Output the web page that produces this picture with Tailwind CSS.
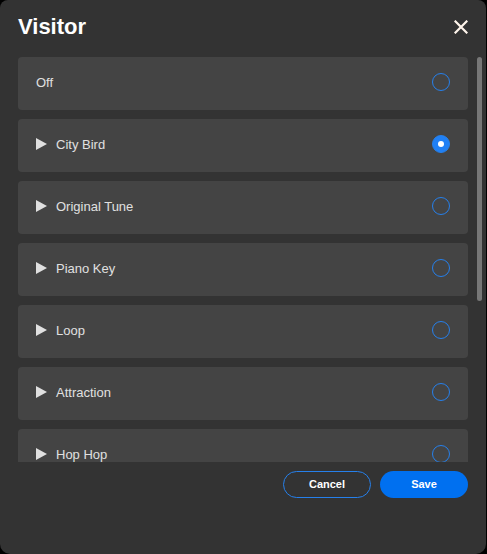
<!DOCTYPE html>
<html lang="en">
<head>
    <meta charset="UTF-8">
    <meta name="viewport" content="width=device-width, initial-scale=1.0">
    <title>Visitor</title>
    <script src="https://cdn.jsdelivr.net/npm/@tailwindcss/browser@4"></script>
</head>
<body class="bg-black font-['Liberation_Sans',Arial,sans-serif]">
    <form class="mr-px h-screen rounded-t-lg rounded-b-[10px] bg-[#333333] pl-[18px] text-[#e0e0e0]">
        <header class="flex h-[57px] items-start justify-between pt-[13px] pr-[18px]">
            <h1 class="text-[22px] leading-7 font-bold text-white">Visitor</h1>
            <button type="button" aria-label="Close" class="mt-[7px]">
                <svg class="block size-3.5" viewBox="0 0 14 14" fill="none" stroke="#fff5ec" stroke-width="2.2">
                    <path d="M.7.7 13.3 13.3M13.3.7.7 13.3" />
                </svg>
            </button>
        </header>

        <div class="flex gap-[9px] pr-1">
            <div id="tones" class="flex h-[405px] flex-1 flex-col gap-[9px] overflow-y-auto [scrollbar-width:none]"></div>
            <div class="h-[244px] w-[5px] rounded-full bg-[#777777]"></div>
        </div>

        <footer class="flex justify-end gap-[9px] pt-[9px] pr-[18px] text-[11px] font-bold text-white">
            <button type="button" class="h-[27px] w-[88px] rounded-full border border-[#2680eb] hover:bg-white/10">Cancel</button>
            <button type="submit" class="h-[27px] w-[88px] rounded-full bg-[#0070f0] hover:bg-[#2680eb]">Save</button>
        </footer>
    </form>

    <script>
        const tones = ["Off", "City Bird", "Original Tune", "Piano Key", "Loop", "Attraction", "Hop Hop"];
        const selected = "City Bird";

        const playButton = (name) => `
            <button type="button" aria-label="Play ${name}" class="mr-[9px]">
                <svg class="block h-3 w-[11px]" viewBox="0 0 11 12" fill="#e0e0e0"><path d="M0 0 11 6 0 12Z" /></svg>
            </button>`;

        document.getElementById("tones").innerHTML = tones.map((name, i) => `
            <div class="flex h-[53px] shrink-0 items-center rounded bg-[#444444] px-[18px] pb-[3px]">
                ${name === "Off" ? "" : playButton(name)}
                <label for="tone-${i}" class="flex-1 pt-0.5 text-[13px] leading-5">${name}</label>
                <input
                    type="radio"
                    id="tone-${i}"
                    name="tone"
                    class="grid size-[18px] appearance-none place-items-center rounded-full border border-[#2680eb] checked:bg-[#2080f5] checked:before:size-[6px] checked:before:rounded-full checked:before:bg-white"
                    ${name === selected ? "checked" : ""}
                />
            </div>`).join("");
    </script>
</body>
</html>
